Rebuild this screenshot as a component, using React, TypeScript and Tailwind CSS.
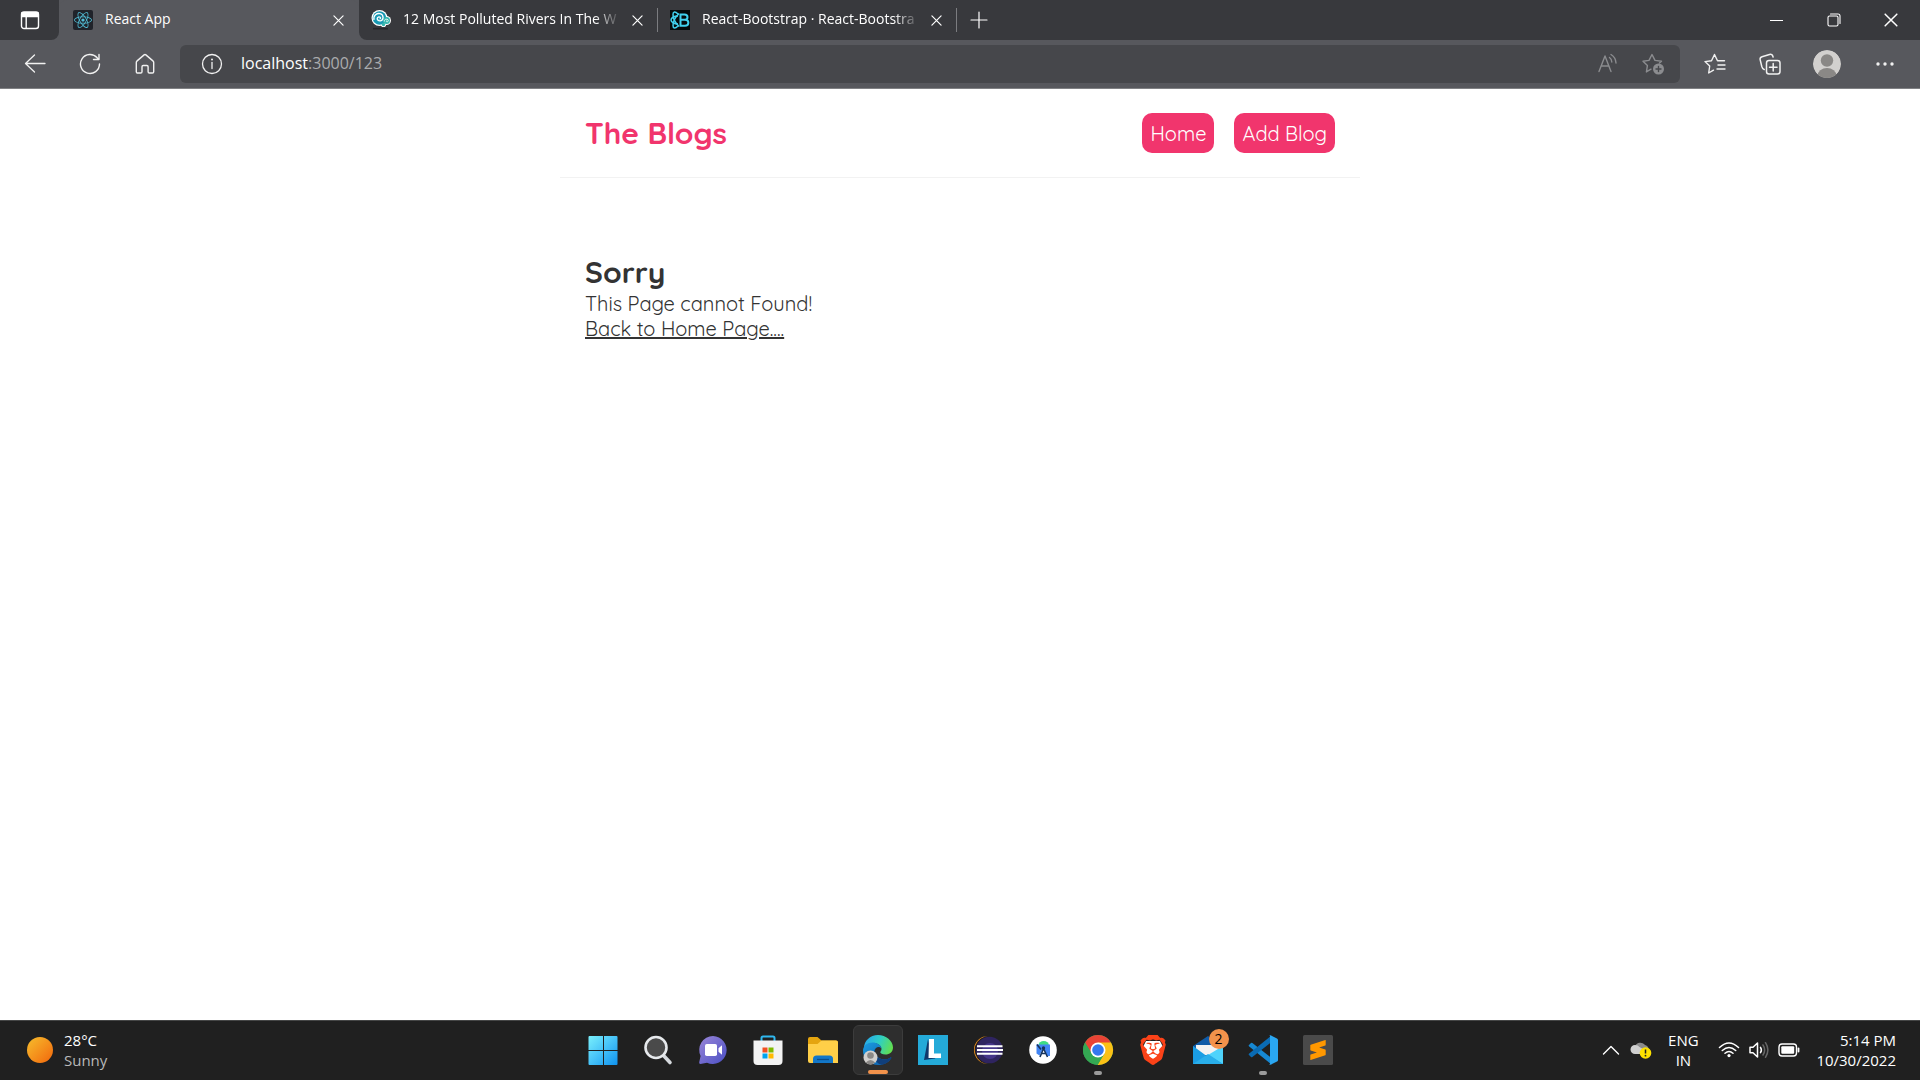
import type { ReactNode } from "react";
import { FaReact } from "react-icons/fa";
import { SiBrave, SiSublimetext } from "react-icons/si";

const line = { fill: "none", stroke: "currentColor", strokeLinecap: "round", strokeLinejoin: "round" } as const;

function CloseIcon({ size = "size-[11px]" }: { size?: string }) {
  return (
    <svg viewBox="0 0 12 12" className={size} {...line} strokeWidth="1.3">
      <path d="M1 1l10 10M11 1L1 11" />
    </svg>
  );
}

function SpiralIcon() {
  return (
    <svg viewBox="0 0 20 20" className="size-5 shrink-0">
      <circle cx="8.5" cy="8" r="8" fill="#fff" />
      <circle cx="15.5" cy="10.5" r="4.5" fill="#fff" />
      <circle cx="12.500" cy="14.500" r="2.600" fill="#fff" />
      <circle cx="8.500" cy="8" r="6.800" fill="#1899b4" />
      <circle cx="15.500" cy="10.500" r="3.500" fill="#35b6ae" />
      <circle cx="12.500" cy="14.500" r="1.700" fill="#35b6ae" />
      <path d="M3 10C2 5 6 3 9 3.600C13 4.500 13 10 9.500 10.800C6 11.300 5 7.500 8 6.800C10 6.700 10 9 8.500 8.800" fill="none" stroke="#fff" strokeWidth="1.300" />
      <path d="M13.300 11.500C13 8.500 17.500 8.500 17.300 10.800C16.800 12.500 14.700 11.800 15.500 10.600" fill="none" stroke="#fff" strokeWidth=".8" />
      <path d="M2 18.700h15" stroke="#25262a" strokeWidth="1.600" />
    </svg>
  );
}

function BootstrapReactIcon() {
  return (
    <svg viewBox="0 0 20 20" className="size-5 shrink-0">
      <rect width="20" height="20" fill="#050b0d" />
      <g fill="none" stroke="#41d0ee" strokeWidth="1.500">
        <path d="M8 6C4 6 1 8 1 10s3 4 7 4" />
        <path d="M8 4C5 1 3 1.500 3 4.500c0 4 3 9 6 12" />
        <path d="M8 16c-3 3-5 2.500-5-.5 0-4 3-9 6-12" />
        <path d="M10.500 4.500h4c4 0 4 5.300 0 5.300h-4zM10.500 9.800h4.500c4.500 0 4.500 6 0 6h-4.500z" strokeWidth="2" />
      </g>
    </svg>
  );
}

function Tab({ icon, title, active }: { icon: ReactNode; title: string; active?: boolean }) {
  return (
    <div className={active ? "flex h-10 w-[300px] items-center rounded-t-lg bg-[#57585d] pr-[9px] pl-[14px]" : "flex h-10 w-[298px] items-center pr-2 pl-3"}>
      {icon}
      <button
        type="button"
        className={
          active
            ? "ml-3 min-w-0 flex-1 pb-0.5 text-left whitespace-nowrap"
            : "ml-3 min-w-0 flex-1 pb-0.5 text-left whitespace-nowrap [mask-image:linear-gradient(to_right,black_88%,transparent)]"
        }
      >
        {title}
      </button>
      <button type="button" aria-label={`Close ${title}`} className="ml-1 grid size-6 shrink-0 place-items-center">
        <CloseIcon />
      </button>
    </div>
  );
}

function TabBar() {
  return (
    <header className="flex h-10 items-center bg-[#57585d] text-sm text-white">
      <div className="flex h-10 w-[59px] items-center justify-center rounded-br-lg bg-[#38393d]">
        <button type="button" aria-label="Tab actions">
          <svg viewBox="0 0 20 20" className="size-5" {...line} strokeWidth="1.400">
            <rect x="1.500" y="2" width="17" height="16.500" rx="2.500" />
            <path d="M2 2.800h16v3.700H2z" fill="currentColor" />
            <path d="M6.200 6v12" />
          </svg>
        </button>
      </div>
      <Tab
        active
        title="React App"
        icon={
          <span className="grid size-5 shrink-0 place-items-center rounded-xs bg-[#20232a]">
            <FaReact className="size-[18px] text-[#52bfd8]" />
          </span>
        }
      />
      <div className="flex h-10 flex-1 items-center rounded-bl-lg bg-[#38393d]">
        <Tab title="12 Most Polluted Rivers In The W" icon={<SpiralIcon />} />
        <span className="h-6 w-px bg-[#7b7c80]" />
        <Tab title="React-Bootstrap · React-Bootstra" icon={<BootstrapReactIcon />} />
        <span className="h-6 w-px bg-[#7b7c80]" />
        <button type="button" aria-label="New tab" className="grid h-10 w-11 place-items-center">
          <svg viewBox="0 0 18 18" className="size-[18px]" {...line} strokeWidth="1.200">
            <path d="M9 1v16M1 9h16" />
          </svg>
        </button>
        <div className="ml-auto flex">
          <button type="button" aria-label="Minimize" className="grid h-10 w-[57px] place-items-center">
            <span className="h-px w-[13px] bg-white" />
          </button>
          <button type="button" aria-label="Restore" className="grid h-10 w-[57px] place-items-center">
            <svg viewBox="0 0 14 14" className="size-[14px]" {...line} strokeWidth="1.100">
              <rect x="1" y="3" width="10" height="10" rx="1.500" />
              <path d="M3.500 1H11a2 2 0 0 1 2 2v7.500" />
            </svg>
          </button>
          <button type="button" aria-label="Close window" className="grid h-10 w-[58px] place-items-center">
            <CloseIcon size="size-[14px]" />
          </button>
        </div>
      </div>
    </header>
  );
}

function ToolButton({ label, width = "w-[55px]", children }: { label: string; width?: string; children: ReactNode }) {
  return (
    <button type="button" aria-label={label} className={`grid h-10 place-items-center ${width}`}>
      {children}
    </button>
  );
}

function Toolbar() {
  return (
    <div className="flex h-[49px] items-center border-b border-[#808184] bg-[#57585d] px-[7px] text-[#f1f1f1]">
      <ToolButton label="Back">
        <svg viewBox="0 0 22 22" className="size-[22px]" {...line} strokeWidth="1.300">
          <path d="M21 10.500H1.500M10.500 2L1.500 10.500l9 8.500" />
        </svg>
      </ToolButton>
      <ToolButton label="Refresh">
        <svg viewBox="0 0 22 22" className="size-[22px]" {...line} strokeWidth="1.400">
          <path d="M20.500 11a9.500 9.500 0 1 1-2.300-6.200l1 1.500M20 1.500v5h-5.500" />
        </svg>
      </ToolButton>
      <ToolButton label="Home">
        <svg viewBox="0 0 22 22" className="size-[22px]" {...line} strokeWidth="1.400">
          <path d="M2.300 9.500c0-.8.300-1.200.8-1.600l7-6c.6-.5 1.200-.5 1.800 0l7 6c.5.400.8.800.8 1.600v9.200c0 .8-.5 1.300-1.300 1.300h-3c-.8 0-1.300-.5-1.300-1.300v-5c0-.8-.5-1.200-1.200-1.200H9.200c-.7 0-1.200.4-1.200 1.200v5c0 .8-.5 1.300-1.300 1.300h-3c-.8 0-1.400-.5-1.400-1.300z" />
        </svg>
      </ToolButton>
      <div className="mr-[7px] ml-2 flex h-[38px] flex-1 items-center rounded-md bg-[#46474b] pl-[21px]">
        <button type="button" aria-label="Site information">
          <svg viewBox="0 0 22 22" className="size-[22px]" {...line} strokeWidth="1.300">
            <circle cx="11" cy="11" r="9.500" />
            <path d="M11 9.500v6" />
            <path d="M11 6.500v.1" strokeWidth="2" />
          </svg>
        </button>
        <button type="button" aria-label="Address" className="ml-[18px] flex-1 pb-0.5 text-left text-base">
          <span className="text-white">localhost</span>
          <span className="text-[#abacae]">:3000/123</span>
        </button>
        <button type="button" aria-label="Read aloud" className="grid h-9 w-[45px] place-items-center text-[#8b8c8f]">
          <svg viewBox="0 0 22 22" className="size-[22px]" {...line} strokeWidth="1.400">
            <path d="M2 18.500L8 3l6 15.500M4.300 13h7.500M12.500 4.500c1.500 1 2.300 2.700 2.300 4.500M14 1.500c3 1.800 4.800 5 5 8.500" />
          </svg>
        </button>
        <button type="button" aria-label="Add to favorites" className="mr-[5px] grid h-9 w-[45px] place-items-center text-[#8b8c8f]">
          <svg viewBox="0 0 22 22" className="size-[22px]" {...line} strokeWidth="1.400">
            <path d="M9 16.200l-4.600 2.700 1-6.300L1 8.200l6-.8 3-5.900 3 5.900 6.500.8-2 1.900" />
            <circle cx="16.500" cy="16" r="5.500" fill="currentColor" stroke="none" />
            <path d="M16.500 13.500v5M14 16h5" stroke="#46474b" />
          </svg>
        </button>
      </div>
      <ToolButton label="Favorites">
        <svg viewBox="0 0 22 22" className="size-[22px]" {...line} strokeWidth="1.400">
          <path d="M9.500 17.200l-4.800 2.800 1-7L1 8.600l6.500-.9L10.500 1.500l3 6.200h7M14 12h7M13 16h8" />
        </svg>
      </ToolButton>
      <ToolButton label="Collections">
        <svg viewBox="0 0 22 22" className="size-[22px]" {...line} strokeWidth="1.500">
          <path d="M5.200 16.500c-1.500-.5-2-1.500-2.400-3L1.200 6.800C.8 5.400 1.500 4.200 3 3.700L10.500 1.500c1.800-.5 3 .3 3.600 2.500" />
          <rect x="7.500" y="7.500" width="13.500" height="13.500" rx="2.500" />
          <path d="M14.200 10.500v7.500M10.500 14.200H18" />
        </svg>
      </ToolButton>
      <ToolButton label="Profile" width="w-[60px]">
        <svg viewBox="0 0 28 28" className="size-7 rounded-full">
          <circle cx="14" cy="14" r="14" fill="#d2d0ce" />
          <circle cx="14" cy="10.500" r="6.200" fill="#8a8886" />
          <ellipse cx="14" cy="26" rx="9.500" ry="8" fill="#8a8886" />
        </svg>
      </ToolButton>
      <ToolButton label="Settings and more" width="w-[56px]">
        <svg viewBox="0 0 18 4" className="h-1 w-[18px]" fill="currentColor">
          <circle cx="2" cy="2" r="1.700" />
          <circle cx="9" cy="2" r="1.700" />
          <circle cx="16" cy="2" r="1.700" />
        </svg>
      </ToolButton>
    </div>
  );
}

function BlogPage() {
  return (
    <main className="flex-1 bg-white font-[Quicksand,Inter,sans-serif] text-xl/[25px] text-[#333]">
      <div className="mx-auto max-w-[800px]">
        <nav className="flex items-center border-b border-[#f2f2f2] px-[25px] py-6">
          <h1 className="text-[30px]/[40px] font-bold text-[#f1356d]">The Blogs</h1>
          <div className="ml-auto flex gap-5 text-white">
            <a href="#home" className="flex h-10 items-center rounded-[10px] bg-[#f1356d] px-2">Home</a>
            <a href="#create" className="flex h-10 items-center rounded-[10px] bg-[#f1356d] px-2">Add Blog</a>
          </div>
        </nav>
        <section className="px-[25px] pt-[75px]">
          <h2 className="text-[30px]/[38px] font-bold">Sorry</h2>
          <p>This Page cannot Found!</p>
          <a href="#home" className="underline">Back to Home Page....</a>
        </section>
      </div>
    </main>
  );
}

const apps: { name: string; running?: boolean; active?: boolean; badge?: string; art: ReactNode }[] = [
  {
    name: "Start",
    art: (
      <>
        <defs>
          <linearGradient id="win" x1="0" y1="0" x2="1" y2="1" gradientUnits="objectBoundingBox">
            <stop offset="0" stopColor="#7af0fc" />
            <stop offset=".5" stopColor="#46c2f8" />
            <stop offset="1" stopColor="#0f92ee" />
          </linearGradient>
        </defs>
        <path fill="url(#win)" d="M1.500 1h13.500v14H.5V2q0-1 1-1zM16 1h12.500q1 0 1 1v13H16zM.5 16H15v14H1.500q-1 0-1-1zM16 16h13.500v13q0 1-1 1H16z" />
      </>
    ),
  },
  {
    name: "Search",
    art: (
      <>
        <path d="M20.500 20.500l6.500 7" stroke="#d5d9dd" strokeWidth="3.600" strokeLinecap="round" />
        <circle cx="13" cy="12.500" r="10.500" fill="#4a4a4a" stroke="#e6e9ec" strokeWidth="2.600" />
      </>
    ),
  },
  {
    name: "Chat",
    art: (
      <>
        <defs>
          <linearGradient id="chat" x1="0" y1="0" x2="1" y2="1">
            <stop offset="0" stopColor="#9a86d8" />
            <stop offset="1" stopColor="#4a4fc4" />
          </linearGradient>
        </defs>
        <path fill="url(#chat)" d="M15 1a14 14 0 1 1-6 26.800L2.500 29Q.8 29 1.200 27.300L2.600 21A14 14 0 0 1 15 1z" />
        <rect x="7" y="9" width="12" height="12" rx="1.800" fill="#fff" />
        <path d="M20.500 13.300l3.500-3v9.500l-3.500-3z" fill="#fff" />
      </>
    ),
  },
  {
    name: "Microsoft Store",
    art: (
      <>
        <path d="M8.500 7V3q0-1.500 1.500-1.500h10q1.500 0 1.500 1.500v4" fill="none" stroke="#2fb8ef" strokeWidth="2" />
        <path d="M.5 5.500h29V26q0 4-4 4h-21q-4 0-4-4z" fill="#f3f3f3" />
        <path d="M9.500 12.500h5v5h-5z" fill="#f25022" />
        <path d="M15.500 12.500h5v5h-5z" fill="#7fba00" />
        <path d="M9.500 18.500h5v5h-5z" fill="#00a4ef" />
        <path d="M15.500 18.500h5v5h-5z" fill="#ffb900" />
      </>
    ),
  },
  {
    name: "File Explorer",
    art: (
      <>
        <path d="M0 4q0-2 2-2h7.500l4 3.500H28q2 0 2 2V15H0z" fill="#e5a50f" />
        <path d="M0 9h9.500l4-3.500H28q2 0 2 2V28H2q-2 0-2-2z" fill="#ffcf48" />
        <path d="M5 24q0-3.500 3.500-3.500h13Q25 20.500 25 24v4H5z" fill="#1377c8" />
        <path d="M9 24.500h12" stroke="#0a4d8c" strokeWidth="1.300" />
      </>
    ),
  },
  {
    name: "Microsoft Edge",
    active: true,
    art: (
      <>
        <defs>
          <linearGradient id="edgeTop" x1="0" y1=".3" x2="1" y2=".6">
            <stop offset="0" stopColor="#27a7ec" />
            <stop offset=".5" stopColor="#2fcfc3" />
            <stop offset="1" stopColor="#63df4d" />
          </linearGradient>
          <linearGradient id="edgeLow" x1="0" y1="0" x2="1" y2="1">
            <stop offset="0" stopColor="#1b9de2" />
            <stop offset="1" stopColor="#0b57a5" />
          </linearGradient>
        </defs>
        <path d="M1 13C1 6 7 0 15 0s15 6 15 12.500c0 4.500-3.500 7-7.500 7-3.300 0-5.200-1-5.200-2.200 0-.8 1.200-1.300 1.200-3.300C18.500 10.500 14.500 8 10.500 8 6 8 2.500 10 1 13z" fill="url(#edgeTop)" />
        <path d="M0 15C.5 10.500 4.500 7.500 9.500 7.500c4.500 0 8.500 2.500 9 6-1.500-2-4-2-5.500-.5-2.500 2.500-1.500 8 4 10.500 4 1.800 8 .8 10.500-1 .6-.4 1 .1.700.7C25.500 27.500 21 30 15 30 7 30-.5 23.500 0 15z" fill="url(#edgeLow)" />
        <path d="M13 13c-2.500 2.500-1.500 8 4 10.500 4 1.800 8 .8 10.500-1 .6-.4 1 .1.700.7-2 3.500-5.500 5.800-9.700 6.500C11 28 8 18 13 13z" fill="#103f7c" />
        <circle cx="7.500" cy="22.500" r="7" fill="#d2d0ce" />
        <circle cx="7.500" cy="20.500" r="3.300" fill="#8a8886" />
        <path d="M2.800 27.500q4.700-5 9.400 0-4.700 4-9.400 0z" fill="#8a8886" />
      </>
    ),
  },
  {
    name: "Lightshot",
    art: (
      <>
        <path d="M0 0h30v30H0z" fill="#24aad8" />
        <path d="M10 4L6 25l11-1.500 3-4-7-1z" fill="#10386b" />
        <path d="M11 4h5v14.500h7V23H10.500z" fill="#fff" />
      </>
    ),
  },
  {
    name: "Eclipse",
    art: (
      <>
        <path d="M12 1.500A14 14 0 0 0 12 28.500L15 29A14 14 0 0 1 15 1z" fill="#f7941e" />
        <circle cx="16.500" cy="15" r="13.300" fill="#2f2460" />
        <circle cx="17" cy="16" r="8" fill="#45358a" />
        <path d="M4 11.300h25.500M4 15h26M4 18.700h25.500" stroke="#fff" strokeWidth="2" />
      </>
    ),
  },
  {
    name: "Android Studio",
    art: (
      <>
        <circle cx="15" cy="15" r="13.800" fill="#fff" />
        <path d="M10.500 10.500a5.200 4.500 0 0 1 10.500 0z" fill="#3ddc84" />
        <path d="M8.500 9.500H22V21h-2.500l-4-8-4 7.500-3-2z" fill="#4285f4" />
        <path d="M9 9.500l4 5M15.500 13.500L12 22M15.500 13.500l4 8.500M14 18.500h3.500" stroke="#15335d" strokeWidth="1.600" fill="none" />
        <circle cx="15.500" cy="13" r="1.700" fill="#15335d" />
      </>
    ),
  },
  {
    name: "Google Chrome",
    running: true,
    art: (
      <>
        <circle cx="15" cy="15" r="15" fill="#34a853" />
        <path d="M2 7.500A15 15 0 0 1 28 7.500L15 10z" fill="#e94335" />
        <path d="M2 7.500L9 19l6-4V7.500z" fill="#e94335" />
        <path d="M15 7.500h13A15 15 0 0 1 14.500 30l7-11.500z" fill="#fbc116" />
        <path d="M2 7.500A15 15 0 0 0 14.500 30L21 19H9z" fill="#34a853" />
        <circle cx="15" cy="15" r="7.500" fill="#fff" />
        <circle cx="15" cy="15" r="5.800" fill="#3478ee" />
      </>
    ),
  },
  {
    name: "Brave",
    art: (
      <>
        <path d="M8 6h14l3 6-3 9-7 5-7-5-3-9z" fill="#fff" />
        <SiBrave size={30} color="#fb4218" />
      </>
    ),
  },
  {
    name: "Mail",
    badge: "2",
    art: (
      <>
        <path d="M0 11L15 1l15 10v9H0z" fill="#0f5ba8" />
        <path d="M3 10h24v10H3z" fill="#f2f2f2" />
        <path d="M0 11l15 11 15-11v18H0z" fill="#1a9de4" />
        <path d="M30 11v18L15 20z" fill="#4fd3fb" />
        <path d="M0 29l15-10 15 10z" fill="#29aeea" />
      </>
    ),
  },
  {
    name: "Visual Studio Code",
    running: true,
    art: (
      <>
        <path d="M1 10l2-2q.7-.5 1.400 0L23.500 23v6.500L.9 11.300Q.3 10.600 1 10z" fill="#1688d3" />
        <path d="M1 20l2 2q.7.500 1.400 0L23.500 7V.500L.9 18.700Q.3 19.400 1 20z" fill="#0a6bb4" />
        <path d="M22.500.3L29 3.400q1 .5 1 1.500v20.200q0 1-1 1.500l-6.500 3.100q-1 .4-1.800-.4 1.300.8 1.300-.8V1.500q0-1.600-1.300-.8.800-.8 1.800-.4z" fill="#2aa7f2" />
      </>
    ),
  },
  {
    name: "Sublime Text",
    art: (
      <>
        <rect width="30" height="30" rx="1.500" fill="#4a4a4a" />
        <SiSublimetext x="5" y="5" size={20} color="#ff9800" />
      </>
    ),
  },
];

function TaskbarApp({ name, running, active, badge, art }: (typeof apps)[number]) {
  return (
    <button
      type="button"
      aria-label={name}
      className={active ? "relative grid size-[50px] place-items-center rounded-md border border-[#3c3c3c] bg-[#2e2e2e]" : "relative grid size-[50px] place-items-center"}
    >
      <svg viewBox="0 0 30 30" className="size-[30px] overflow-visible">{art}</svg>
      {active && <span className="absolute bottom-0 h-1 w-5 rounded-full bg-[#f2924b]" />}
      {running && <span className="absolute bottom-0 h-1 w-2 rounded-full bg-[#9b9b9b]" />}
      {badge && (
        <span className="absolute top-1 right-1 grid size-5 place-items-center rounded-full bg-[#f2924b] text-sm text-black">{badge}</span>
      )}
    </button>
  );
}

function Taskbar() {
  return (
    <footer className="flex h-[60px] items-center border-t border-[#454646] bg-[#202020] pb-0.5 text-[15px]/[20px] text-white">
      <div className="flex flex-1 px-6">
        <button type="button" className="flex items-center gap-[11px] pl-[3px] text-left">
          <span className="size-[26px] rounded-full bg-linear-to-br from-[#f5bd2c] to-[#f0640a]" />
          <span>
            <span className="block">28°C</span>
            <span className="block text-[#b9b9b9]">Sunny</span>
          </span>
        </button>
      </div>
      <div className="flex gap-[5px]">
        {apps.map((app) => (
          <TaskbarApp key={app.name} {...app} />
        ))}
      </div>
      <div className="flex flex-1 items-center justify-end px-6">
        <button type="button" aria-label="Show hidden icons" className="grid w-[30px] place-items-center">
          <svg viewBox="0 0 18 10" className="h-[10px] w-[18px]" {...line} strokeWidth="1.400">
            <path d="M1.500 9L9 1.500 16.500 9" />
          </svg>
        </button>
        <button type="button" aria-label="OneDrive" className="grid w-[30px] place-items-center">
          <svg viewBox="0 0 22 18" className="h-[18px] w-[22px]">
            <path d="M5 5a6 6 0 0 1 10-1q4 1 4 6l-6 2z" fill="#8c8c8c" />
            <path d="M5 13a4.500 4.500 0 0 1 0-9q3 0 4.500 2L18 11v2z" fill="#cfcfcf" />
            <circle cx="15.500" cy="12" r="5.800" fill="#fde100" />
            <path d="M15.500 8.500v4" stroke="#222" strokeWidth="1.500" />
            <circle cx="15.500" cy="14.700" r=".9" fill="#222" />
          </svg>
        </button>
        <button type="button" className="mr-2.5 ml-1.5 w-[42px] text-center">
          ENG
          <br />
          IN
        </button>
        <button type="button" aria-label="Network, volume and battery" className="flex items-center gap-[9px] pl-1">
          <svg viewBox="0 0 22 16" className="h-4 w-[22px]" {...line} strokeWidth="1.500">
            <path d="M1.500 5.500Q11-3.500 20.500 5.500M4.300 8.500q6.700-6 13.400 0M7 11.300q4-3.500 8 0" />
            <circle cx="11" cy="13.600" r="1.600" fill="currentColor" stroke="none" />
          </svg>
          <svg viewBox="0 0 20 18" className="h-[18px] w-5" {...line} strokeWidth="1.500">
            <path d="M1 6.300h3L8.500 2v14L4 11.700H1z" />
            <path d="M11.500 6.300q1.800 2.700 0 5.400" />
            <path d="M14 4q3.300 5 0 10M16.500 1.700q4.800 7.300 0 14.600" stroke="#666" />
          </svg>
          <svg viewBox="0 0 22 14" className="h-[14px] w-[22px]" {...line} strokeWidth="1.400">
            <rect x="1" y="1" width="17.500" height="12" rx="3" />
            <rect x="3.300" y="3.300" width="12.900" height="7.400" rx="1" fill="currentColor" stroke="none" />
            <path d="M20.500 5.500v3" strokeWidth="1.800" />
          </svg>
        </button>
        <button type="button" className="ml-4 text-right">
          5:14 PM
          <br />
          10/30/2022
        </button>
      </div>
    </footer>
  );
}

export default function App() {
  return (
    <div className="flex min-h-screen flex-col font-['Segoe_UI',Open_Sans,sans-serif]">
      <TabBar />
      <Toolbar />
      <BlogPage />
      <Taskbar />
    </div>
  );
}
